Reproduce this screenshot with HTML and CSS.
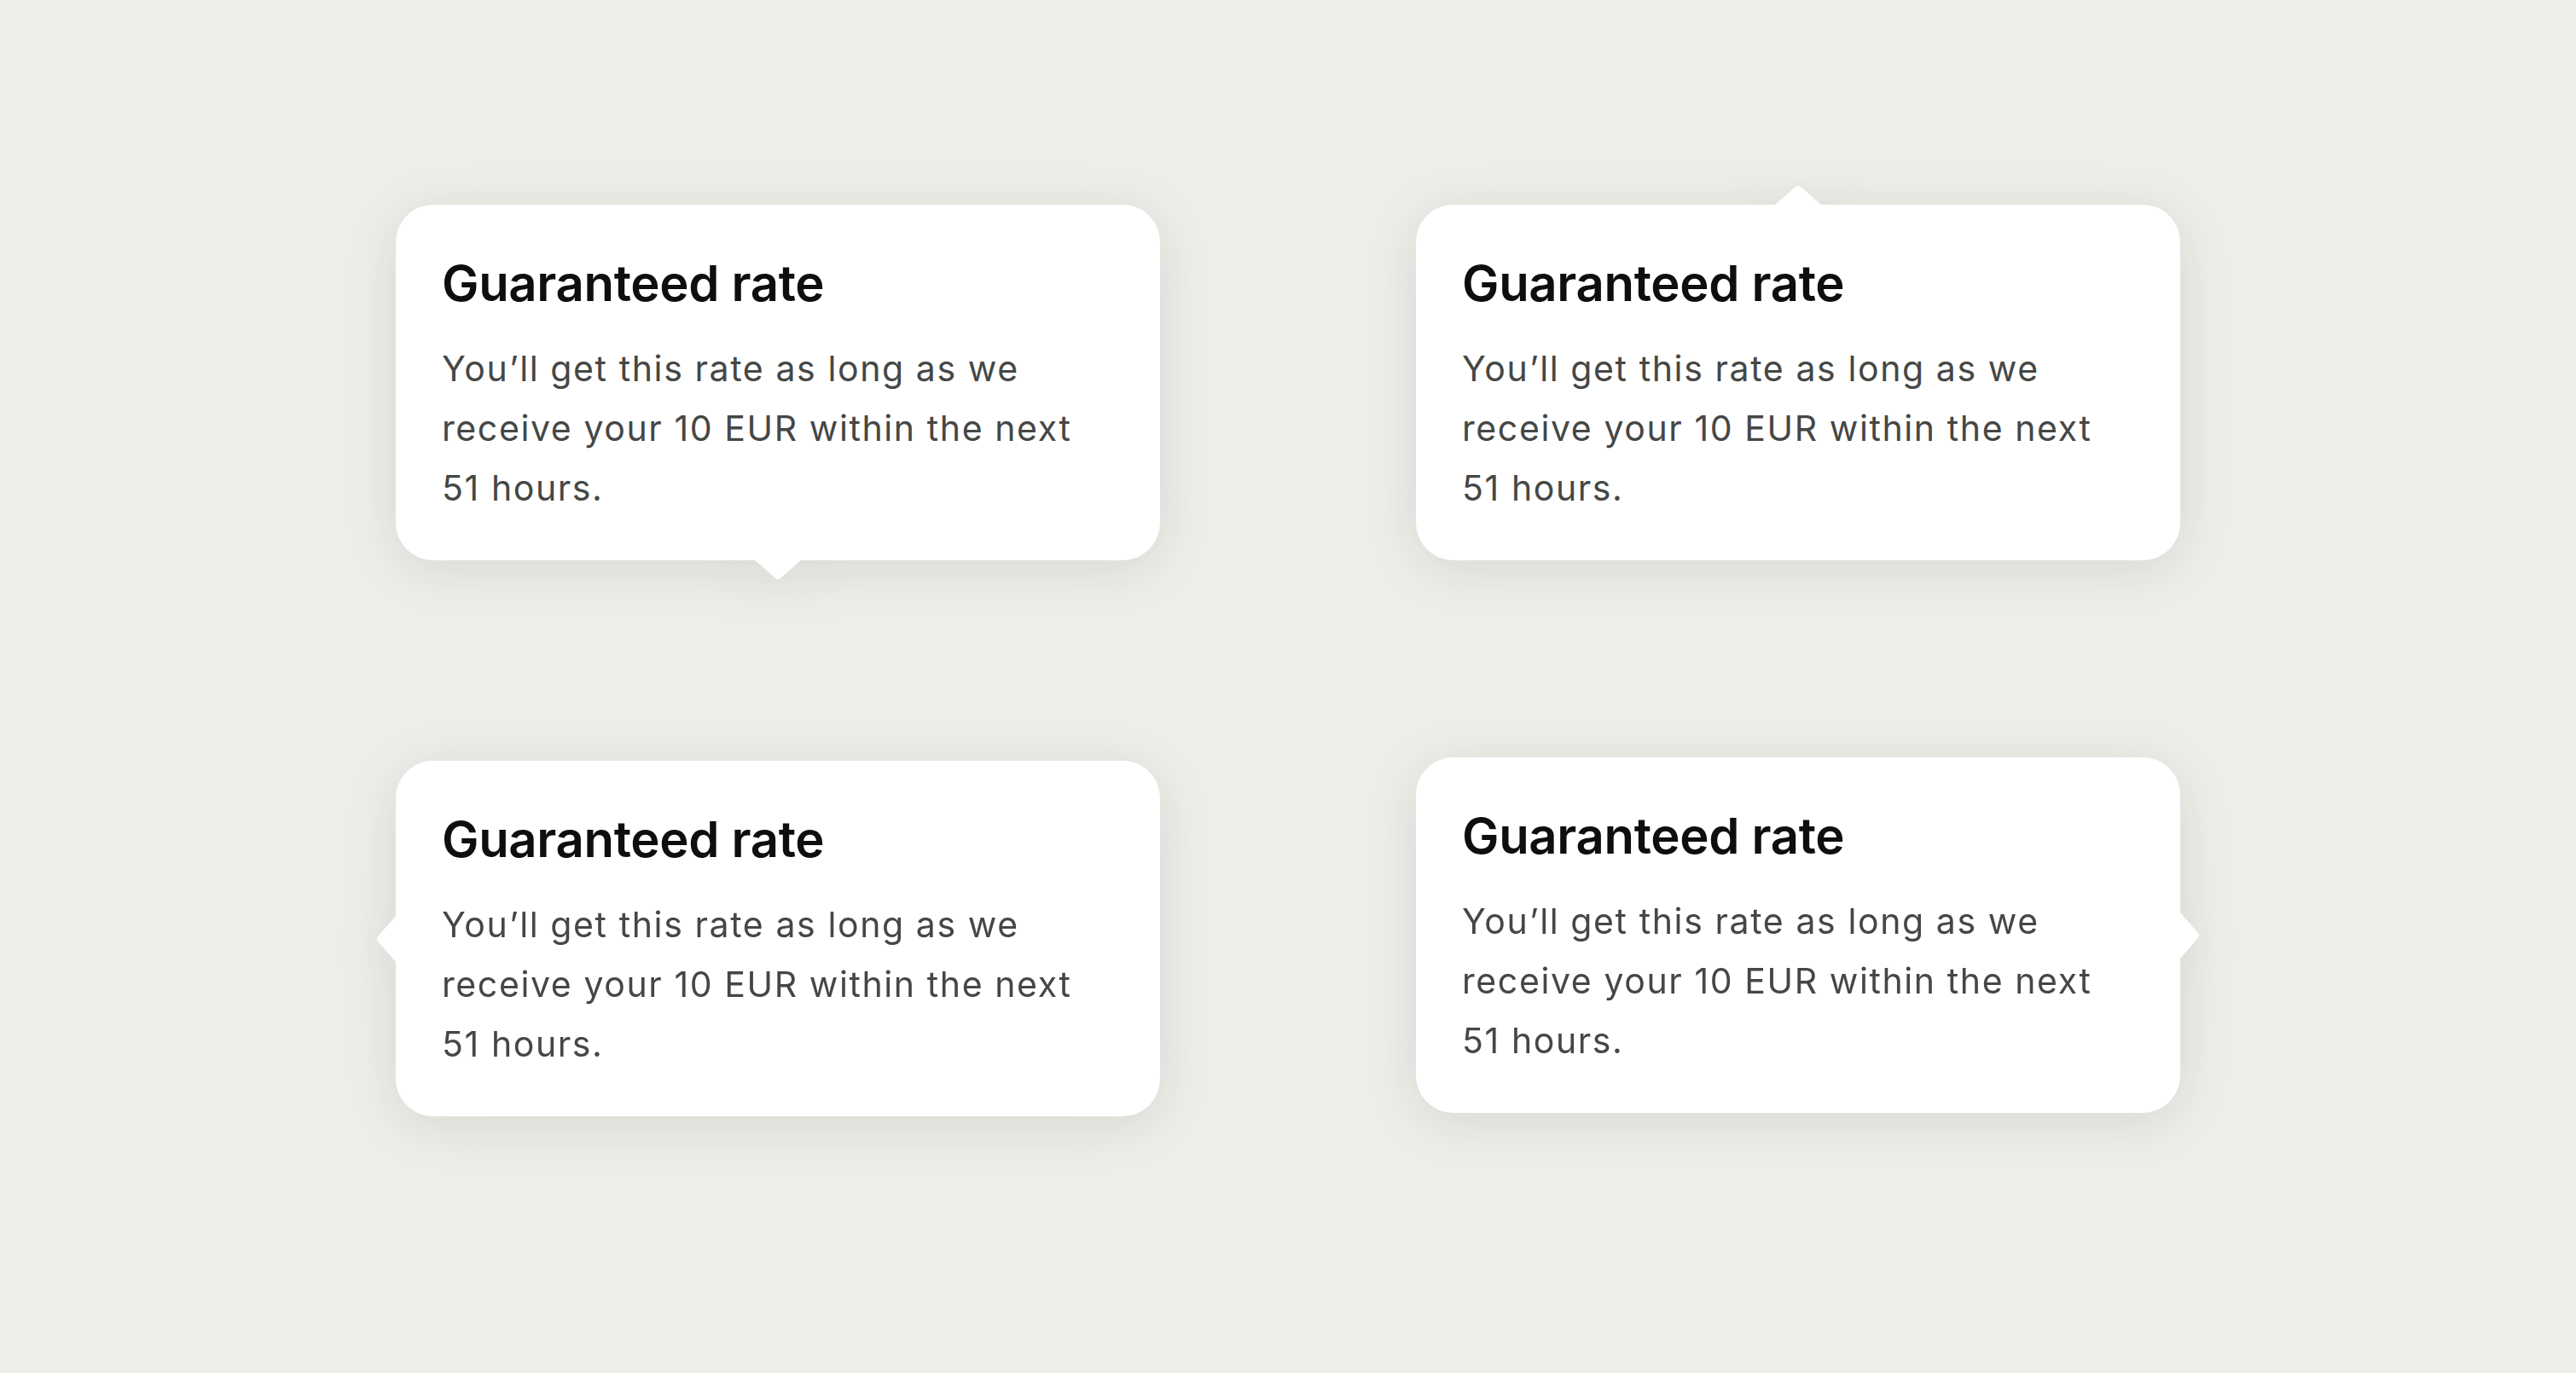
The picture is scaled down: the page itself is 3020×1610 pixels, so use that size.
FILE: index.html
```html
<!DOCTYPE html>
<html lang="en">
<head>
<meta charset="utf-8">
<title>Tooltips</title>
<link rel="stylesheet" href="styles.css">
</head>
<body>
<main class="board">
  <div class="tip">
    <h2 class="tip-title">Guaranteed rate</h2>
    <p class="tip-body">You’ll get this rate as long as we receive your 10 EUR within the next 51 hours.</p>
    <svg class="arrow arrow-down" width="56" height="24" viewBox="0 0 56 24"><path d="M0 0H56L31.5 21.5Q28 24.5 24.5 21.5Z" fill="#fff"/></svg>
  </div>
  <div class="tip">
    <h2 class="tip-title">Guaranteed rate</h2>
    <p class="tip-body">You’ll get this rate as long as we receive your 10 EUR within the next 51 hours.</p>
    <svg class="arrow arrow-up" width="56" height="24" viewBox="0 0 56 24"><path d="M0 24H56L31.5 2.5Q28 -0.5 24.5 2.5Z" fill="#fff"/></svg>
  </div>
  <div class="tip">
    <h2 class="tip-title">Guaranteed rate</h2>
    <p class="tip-body">You’ll get this rate as long as we receive your 10 EUR within the next 51 hours.</p>
    <svg class="arrow arrow-left" width="24" height="56" viewBox="0 0 24 56"><path d="M24 0V56L2.5 31.5Q-0.5 28 2.5 24.5Z" fill="#fff"/></svg>
  </div>
  <div class="tip tip-raised">
    <h2 class="tip-title">Guaranteed rate</h2>
    <p class="tip-body">You’ll get this rate as long as we receive your 10 EUR within the next 51 hours.</p>
    <svg class="arrow arrow-right" width="24" height="56" viewBox="0 0 24 56"><path d="M0 0V56L21.5 31.5Q24.5 28 21.5 24.5Z" fill="#fff"/></svg>
  </div>
</main>
</body>
</html>
```

FILE: styles.css
```css
html, body {
  margin: 0;
  padding: 0;
}

body {
  background: #edefea;
  font-family: Inter, "Noto Sans", "Liberation Sans", sans-serif;
  width: 3020px;
  height: 1610px;
  overflow: hidden;
}

.board {
  display: grid;
  grid-template-columns: 896px 896px;
  column-gap: 300px;
  row-gap: 235px;
  align-items: start;
  padding: 240px 0 0 464px;
}

.tip {
  position: relative;
  background: #ffffff;
  border-radius: 44px;
  padding: 56px 54px 50px;
  filter: drop-shadow(0 10px 34px rgba(40, 45, 35, 0.12));
}

.tip-raised {
  margin-top: -4px;
}

.tip-title {
  margin: 0 0 29px;
  font-size: 58px;
  line-height: 72px;
  font-weight: 600;
  color: #0e0f0c;
  letter-spacing: -0.3px;
}

.tip-body {
  margin: 0;
  font-size: 41px;
  line-height: 70px;
  font-weight: 400;
  letter-spacing: 1.6px;
  color: #454745;
}

.arrow {
  position: absolute;
  display: block;
}

.arrow-down {
  top: calc(100% - 1px);
  left: 50%;
  margin-left: -28px;
}

.arrow-up {
  bottom: calc(100% - 1px);
  left: 50%;
  margin-left: -28px;
}

.arrow-left {
  right: calc(100% - 1px);
  top: 50%;
  margin-top: -28px;
}

.arrow-right {
  left: calc(100% - 1px);
  top: 50%;
  margin-top: -28px;
}
```
